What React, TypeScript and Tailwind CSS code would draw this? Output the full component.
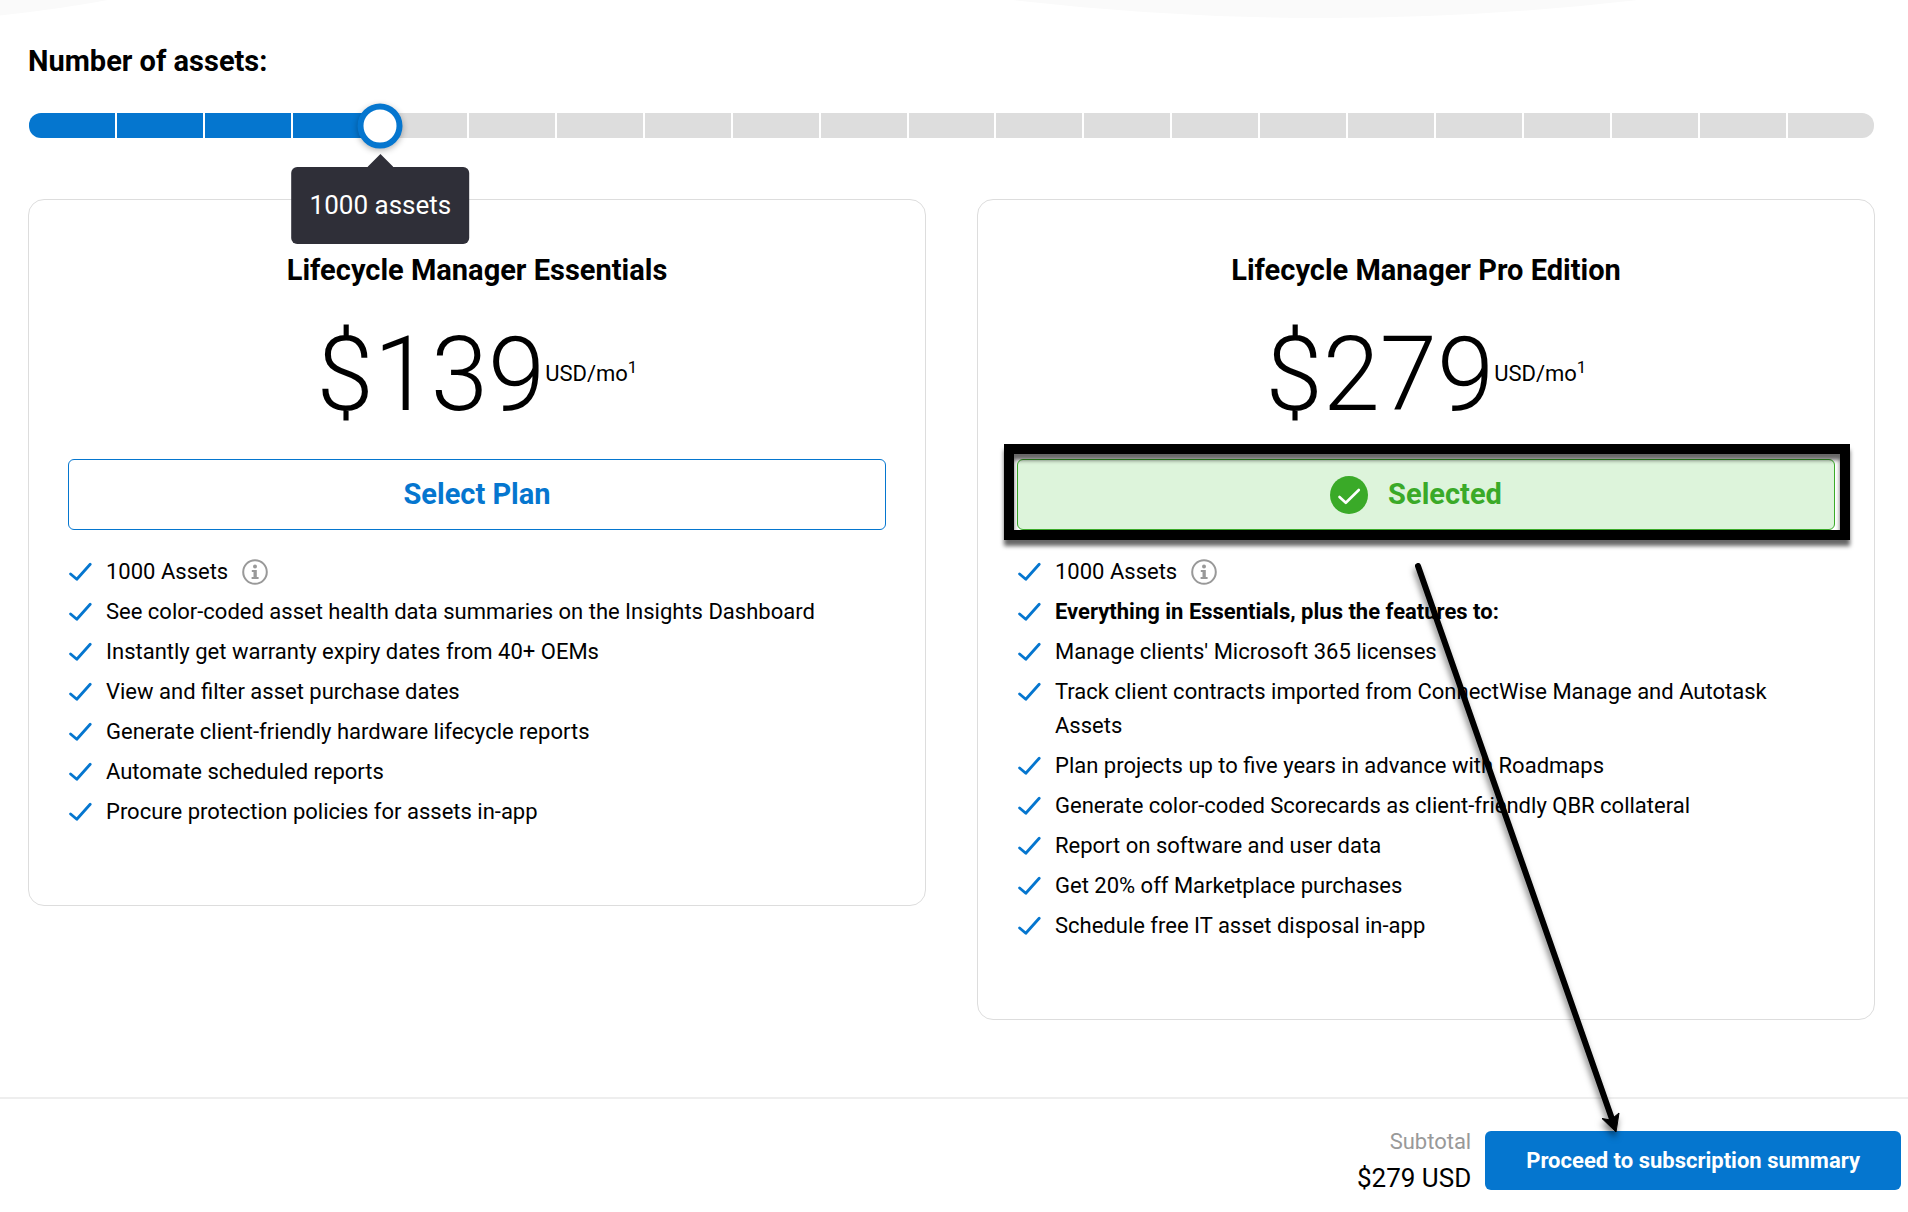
import { useState } from "react";

const SEGMENTS = 21;
const STEP = 250;

function Check() {
  return (
    <svg viewBox="0 0 24 24" className="mt-[5px] size-6 shrink-0 text-[#0576cf]" fill="none" stroke="currentColor" strokeWidth="2.8" strokeLinecap="round" strokeLinejoin="round" aria-hidden="true">
      <path d="M2.600 14 8.800 19.300 22.200 4.200" />
    </svg>
  );
}

function SelectedBadge() {
  return (
    <svg viewBox="0 0 38 38" className="size-[38px]" aria-hidden="true">
      <circle cx="19" cy="19" r="19" fill="#3aaa28" />
      <path d="M9.500 21 15.800 26.800 28.800 14" fill="none" stroke="#fff" strokeWidth="2.6" strokeLinecap="round" strokeLinejoin="round" />
    </svg>
  );
}

function AssetSlider({ value, onChange }: { value: number; onChange: (v: number) => void }) {
  const filled = value / STEP;
  const left = { left: `${(filled / SEGMENTS) * 100}%` };
  return (
    <div className="relative mx-px h-[25px]">
      <div className="flex h-full gap-[2px] overflow-hidden rounded-xl">
        {Array.from({ length: SEGMENTS }, (_, i) => (
          <div key={i} className={i < filled ? "flex-1 bg-[#0576cf]" : "flex-1 bg-[#dddddd]"} />
        ))}
      </div>
      <input
        id="assets"
        type="range"
        min={0}
        max={SEGMENTS * STEP}
        step={STEP}
        value={value}
        onChange={(e) => onChange(Number(e.target.value))}
        className="absolute inset-0 z-20 h-full w-full cursor-pointer opacity-0"
      />
      <div style={left} className="absolute top-1/2 z-10 size-[45px] -translate-x-1/2 -translate-y-1/2 rounded-full border-6 border-[#0576cf] bg-white shadow-[0_2px_6px_rgba(0,0,0,0.3)]" />
      <div style={left} className="absolute top-[41px] z-10 flex -translate-x-1/2 flex-col items-center">
        <div className="h-[13px] w-[26px] bg-[#2f2f38] [clip-path:polygon(50%_0,100%_100%,0_100%)]" />
        <div className="rounded-md bg-[#2f2f38] px-[18px] py-[22px] text-[26px] leading-[33px] whitespace-nowrap text-white">{value} assets</div>
      </div>
    </div>
  );
}

function InfoIcon() {
  return (
    <svg viewBox="0 0 26 26" className="size-[26px]" aria-hidden="true">
      <circle cx="13" cy="13" r="11.8" fill="none" stroke="#999" strokeWidth="2" />
      <circle cx="13" cy="7.6" r="2" fill="#999" />
      <path d="M9.8 11h5v7h1.8v2H9.6v-2h1.9v-5H9.8z" fill="#999" />
    </svg>
  );
}

type Plan = { id: string; name: string; price: number; features: { text: string; bold?: boolean }[] };

const PLANS: Plan[] = [
  {
    id: "essentials",
    name: "Lifecycle Manager Essentials",
    price: 139,
    features: [
      { text: "See color-coded asset health data summaries on the Insights Dashboard" },
      { text: "Instantly get warranty expiry dates from 40+ OEMs" },
      { text: "View and filter asset purchase dates" },
      { text: "Generate client-friendly hardware lifecycle reports" },
      { text: "Automate scheduled reports" },
      { text: "Procure protection policies for assets in-app" },
    ],
  },
  {
    id: "pro",
    name: "Lifecycle Manager Pro Edition",
    price: 279,
    features: [
      { text: "Everything in Essentials, plus the features to:", bold: true },
      { text: "Manage clients' Microsoft 365 licenses" },
      { text: "Track client contracts imported from ConnectWise Manage and Autotask Assets" },
      { text: "Plan projects up to five years in advance with Roadmaps" },
      { text: "Generate color-coded Scorecards as client-friendly QBR collateral" },
      { text: "Report on software and user data" },
      { text: "Get 20% off Marketplace purchases" },
      { text: "Schedule free IT asset disposal in-app" },
    ],
  },
];

function PlanCard({ plan, assets, selected, onSelect }: { plan: Plan; assets: number; selected: boolean; onSelect: () => void }) {
  return (
    <section className="rounded-2xl border border-[#dddddd] bg-white px-[39px] pt-[50px] pb-[76px]">
      <h2 className="text-center text-[29px] leading-10 font-bold">{plan.name}</h2>
      <div className="mt-8 flex h-[104px] items-center justify-center">
        <span className="text-[103px] leading-none font-light">${plan.price}</span>
        <span className="text-[22px] leading-8">
          USD/mo<sup className="text-[17px]">1</sup>
        </span>
      </div>
      <div className="relative mt-[33px]">
        {selected ? (
          <button type="button" className="flex h-[71px] w-full items-center justify-center gap-5 rounded-md border border-[#3aaa28] bg-[#ddf4db] pr-5 text-[29px] font-bold text-[#3aaa28]">
            <SelectedBadge />
            Selected
          </button>
        ) : (
          <button type="button" onClick={onSelect} className="h-[71px] w-full rounded-md border border-[#0576cf] text-[29px] font-bold text-[#0576cf]">
            Select Plan
          </button>
        )}
        {selected && (
          <div className="pointer-events-none absolute -top-[15px] -right-[15px] -bottom-[10px] -left-[13px] border-10 border-black drop-shadow-[0_6px_2px_rgba(0,0,0,0.6)]" />
        )}
      </div>
      <ul className="mt-[25px] flex flex-col gap-[6px] text-[22px] leading-[34px]">
        <li className="flex gap-[14px]">
          <Check />
          <span className="flex items-center gap-[14px]">
            {assets} Assets <InfoIcon />
          </span>
        </li>
        {plan.features.map((f) => (
          <li key={f.text} className="flex gap-[14px]">
            <Check />
            <span className={f.bold ? "font-bold" : ""}>{f.text}</span>
          </li>
        ))}
      </ul>
    </section>
  );
}

export default function App() {
  const [assets, setAssets] = useState(1000);
  const [selectedId, setSelectedId] = useState("pro");
  const selected = PLANS.find((p) => p.id === selectedId)!;

  return (
    <div className="relative flex min-h-screen flex-col overflow-hidden bg-white font-['Roboto',sans-serif] text-black">
      <svg viewBox="0 0 1908 20" className="absolute top-0 left-0 w-full" fill="#fafafa" aria-hidden="true">
        <path d="M0 0H108Q60 9 0 15.500Z" />
        <path d="M1012 0Q1325 36 1638 0Z" />
      </svg>

      <main className="relative pt-[41px] pr-[33px] pb-[77px] pl-7">
        <label htmlFor="assets" className="block text-[29px] leading-10 font-bold">
          Number of assets:
        </label>
        <div className="mt-8">
          <AssetSlider value={assets} onChange={setAssets} />
        </div>
        <div className="mt-[61px] grid grid-cols-2 items-start gap-[51px]">
          {PLANS.map((p) => (
            <PlanCard key={p.id} plan={p} assets={assets} selected={p.id === selectedId} onSelect={() => setSelectedId(p.id)} />
          ))}
        </div>
      </main>

      <footer className="flex flex-1 items-start justify-end gap-[14px] border-t-2 border-[#eeeeee] pt-[25px] pr-[7px]">
        <div className="text-right">
          <div className="text-[22px] leading-9 text-[#999999]">Subtotal</div>
          <div className="text-[26px] leading-9">${selected.price} USD</div>
        </div>
        <button type="button" className="mt-[7px] h-[59px] rounded-md bg-[#0576cf] px-[41px] text-[22px] font-bold text-white">
          Proceed to subscription summary
        </button>
      </footer>

      <svg viewBox="0 0 230 590" className="pointer-events-none absolute top-[556px] right-[278px] h-[590px] w-[230px] drop-shadow-[-1px_5px_3px_rgba(0,0,0,0.5)]" aria-hidden="true">
        <path d="M18 10 212 563" stroke="#000" strokeWidth="6" strokeLinecap="round" />
        <path d="M216 576 202 562.500 210.500 564 219 557Z" stroke="#000" strokeWidth="1" strokeLinejoin="miter" />
      </svg>
    </div>
  );
}
